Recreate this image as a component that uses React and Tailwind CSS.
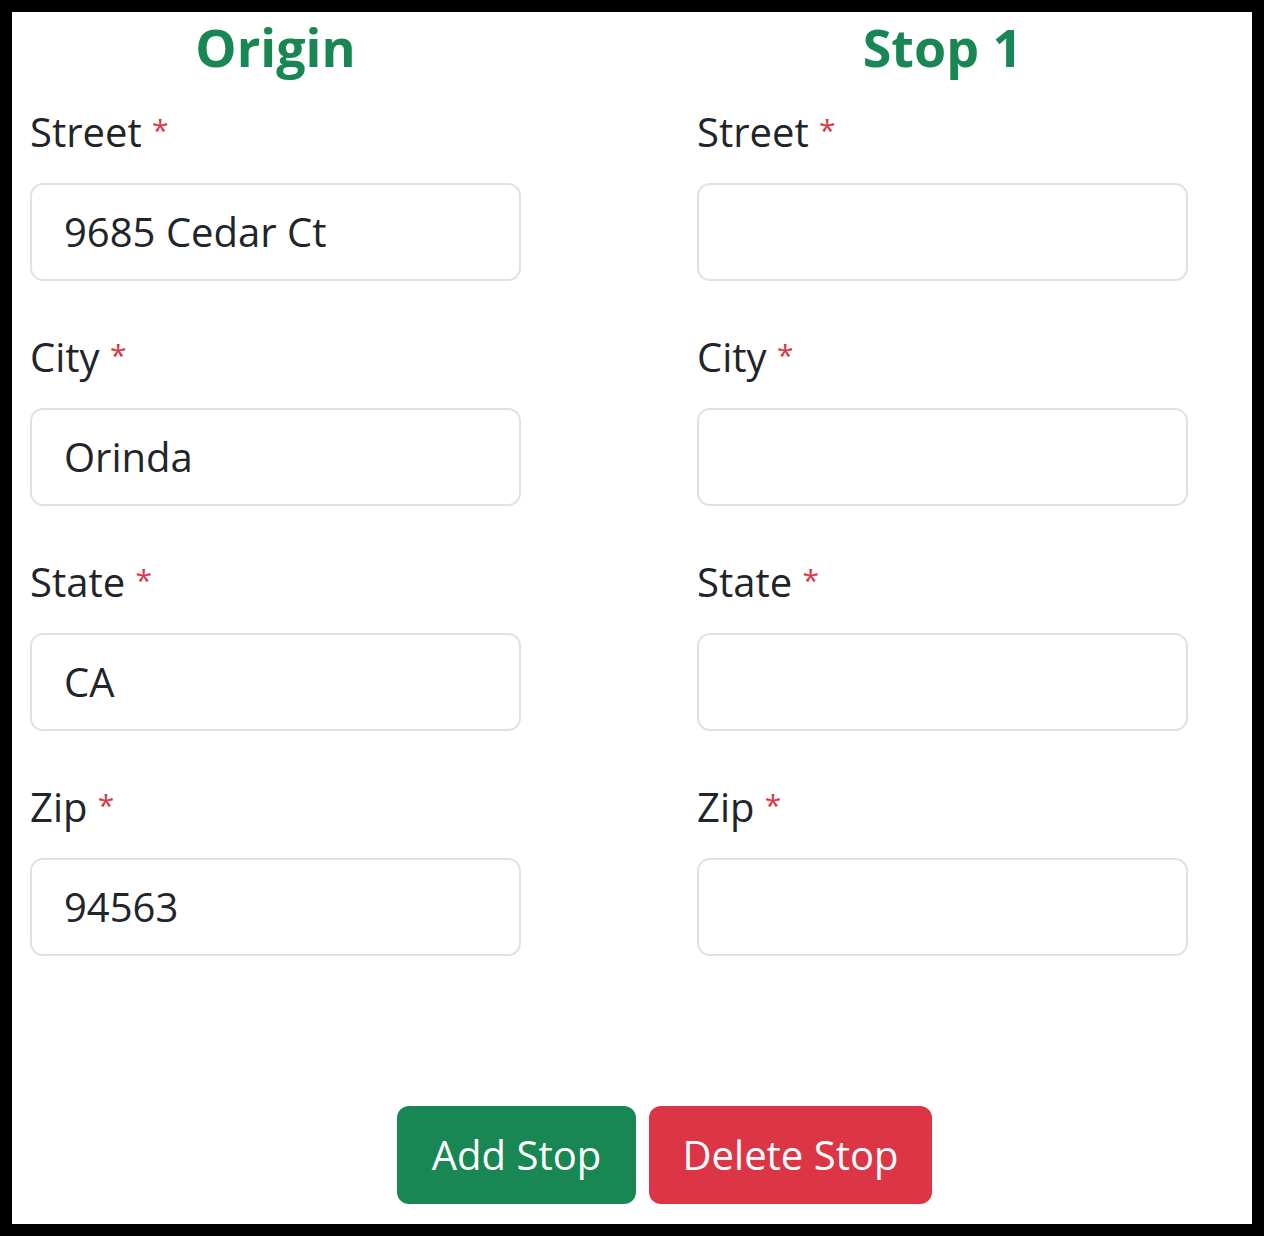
import React from "react";

const font = { fontFamily: '"Open Sans", "Noto Sans", Arial, sans-serif' };

function Field({ label, value }) {
  return (
    <div className="flex flex-col">
      <label className="block h-[60px] text-[40px] leading-[60px] text-[#212529] mt-[1px] mb-[21px]">
        {label}{" "}
        <span className="text-[#dc3545] text-[30px] leading-none relative top-[-6px]">*</span>
      </label>
      <div className="h-[98px] rounded-[13px] border-2 border-[#dee2e6] bg-white flex items-center px-[32px] text-[40px] text-[#212529] mb-[45px]">
        {value}
      </div>
    </div>
  );
}

function Column({ title, values }) {
  return (
    <div className="flex flex-col w-[491px]">
      <h2 className="text-[52px] leading-[62px] font-bold text-[#198754] text-center mt-[4px] mb-[23px]">
        {title}
      </h2>
      <Field label="Street" value={values[0]} />
      <Field label="City" value={values[1]} />
      <Field label="State" value={values[2]} />
      <Field label="Zip" value={values[3]} />
    </div>
  );
}

export default function App() {
  return (
    <div className="bg-black p-[12px] w-[1264px] h-[1236px]" style={font}>
      <div className="bg-white w-full h-full flex flex-col">
        <div className="flex pl-[18px] gap-[176px]">
          <Column title="Origin" values={["9685 Cedar Ct", "Orinda", "CA", "94563"]} />
          <Column title="Stop 1" values={["", "", "", ""]} />
        </div>
        <div className="flex pl-[385px] gap-[13px] mt-[105px]">
          <button className="w-[239px] h-[98px] rounded-[12px] bg-[#198754] text-white text-[40px] flex items-center justify-center">
            Add Stop
          </button>
          <button className="w-[283px] h-[98px] rounded-[12px] bg-[#dc3545] text-white text-[40px] flex items-center justify-center">
            Delete Stop
          </button>
        </div>
      </div>
    </div>
  );
}
